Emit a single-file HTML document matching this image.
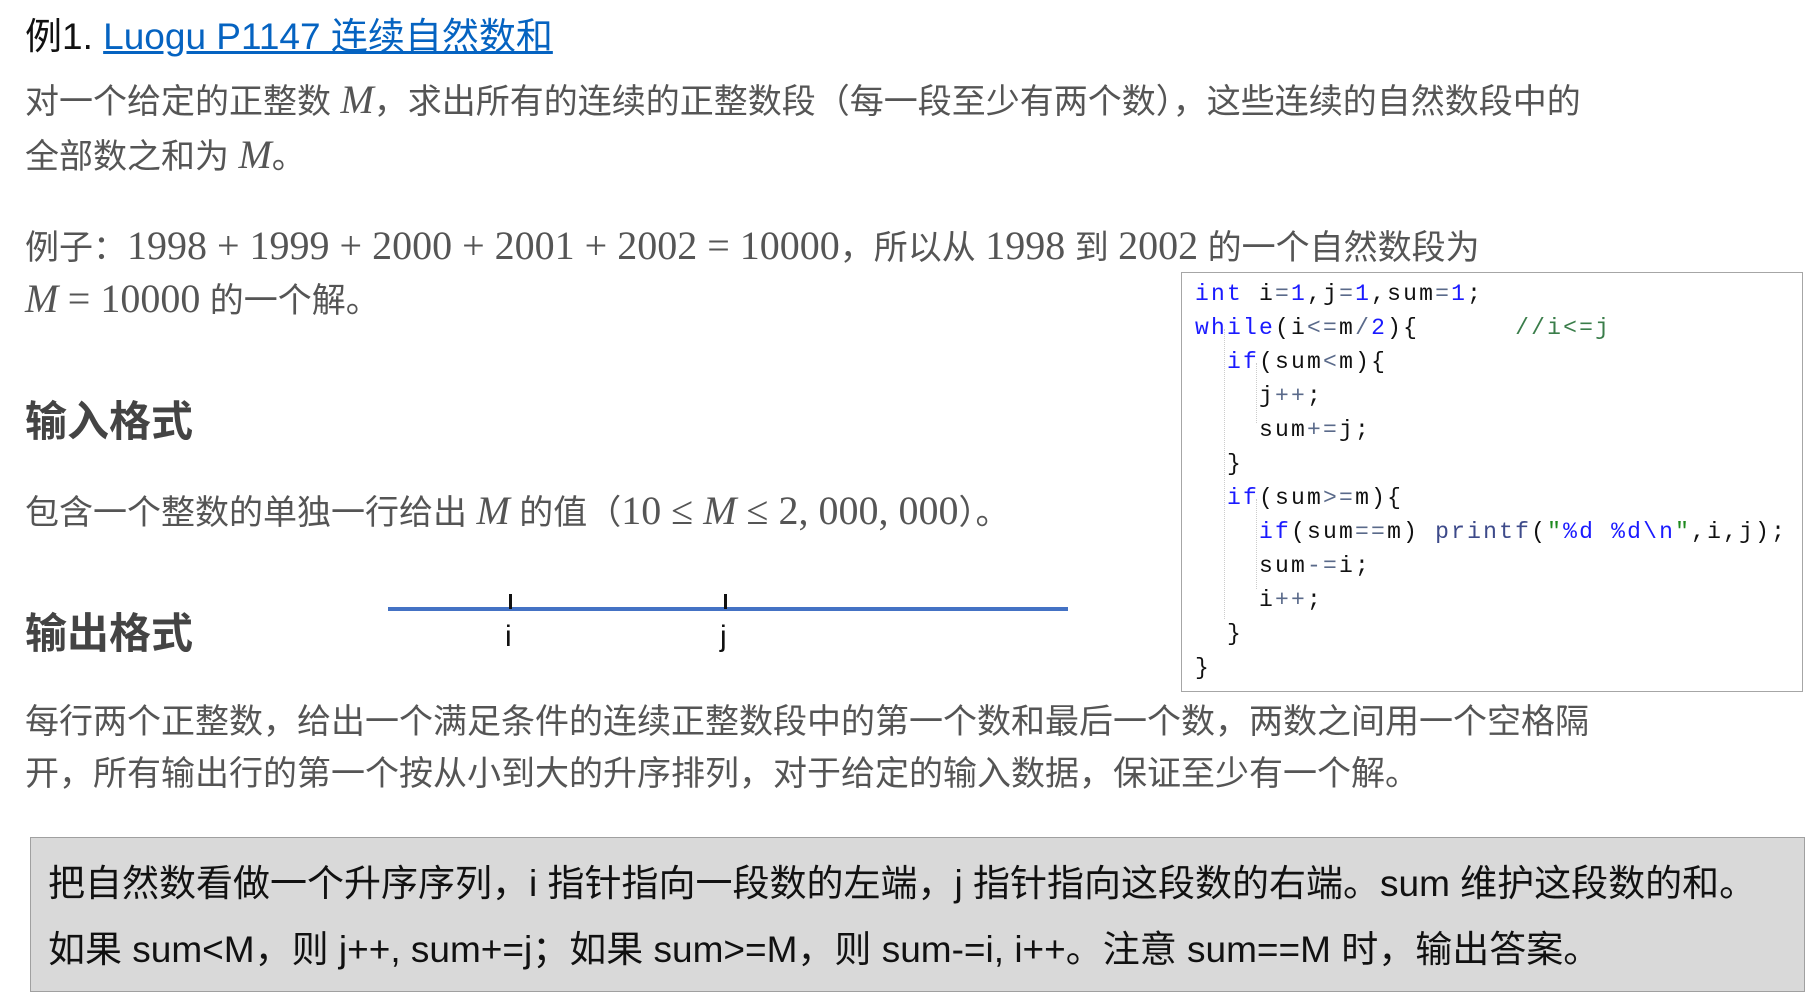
<!DOCTYPE html>
<html><head><meta charset="utf-8"><style>
body{margin:0;width:1805px;height:996px;background:#fff;position:relative;overflow:hidden;font-family:"Liberation Sans","Noto Sans CJK SC",sans-serif;}
.t{position:absolute;white-space:nowrap;line-height:1;}
.p{color:#555;font-size:34px;left:25px;}
.m{font-family:"Liberation Serif",serif;font-style:italic;font-size:40px;}
.n{font-family:"Liberation Serif",serif;font-size:40px;}
.h{color:#444;font-weight:bold;font-size:42px;left:25px;}
#code{position:absolute;left:1181px;top:272px;width:622px;height:420px;border:1.5px solid #a6a6a6;box-sizing:border-box;}
.c{position:absolute;font-family:"Liberation Mono",monospace;font-size:23px;letter-spacing:2.2px;color:#111;white-space:pre;line-height:1;}
.k{color:#1a1aff}.g{color:#3a7d4a}.s{color:#1e8a1e}.f{color:#3d4a8a}.o{color:#5a6a8a}
.gd{position:absolute;border-left:1.5px dotted #ccc;}
</style></head><body>
<div class="t" style="left:25px;top:18px;font-size:37px;color:#111;">例1. <span style="color:#0563c1;text-decoration:underline;">Luogu P1147 连续自然数和</span></div>
<div class="t p" style="top:80px;">对一个给定的正整数 <span class="m">M</span>，求出所有的连续的正整数段（每一段至少有两个数），这些连续的自然数段中的</div>
<div class="t p" style="top:135px;">全部数之和为 <span class="m">M</span>。</div>
<div class="t p" style="top:226px;">例子：<span class="n">1998 + 1999 + 2000 + 2001 + 2002 = 10000</span>，所以从 <span class="n">1998</span> 到 <span class="n">2002</span> 的一个自然数段为</div>
<div class="t p" style="top:279px;"><span class="m">M</span> <span class="n">= 10000</span> 的一个解。</div>
<div class="t h" style="top:401px;">输入格式</div>
<div class="t p" style="top:491px;">包含一个整数的单独一行给出 <span class="m">M</span> 的值（<span class="n">10 ≤ <i>M</i> ≤ 2, 000, 000</span>）。</div>
<div class="t h" style="top:613px;">输出格式</div>
<div style="position:absolute;left:388px;top:607px;width:680px;height:4px;background:#4472c4;"></div>
<div style="position:absolute;left:509px;top:594px;width:3px;height:15px;background:#111;"></div>
<div style="position:absolute;left:724px;top:594px;width:3px;height:15px;background:#111;"></div>
<div class="t" style="left:505px;top:622px;font-size:30px;color:#111;">i</div>
<div class="t" style="left:720px;top:622px;font-size:30px;color:#111;">j</div>
<div class="t p" style="top:705px;">每行两个正整数，给出一个满足条件的连续正整数段中的第一个数和最后一个数，两数之间用一个空格隔</div>
<div class="t p" style="top:757px;">开，所有输出行的第一个按从小到大的升序排列，对于给定的输入数据，保证至少有一个解。</div>
<div id="code">
<div class="gd" style="left:42px;top:56px;height:290px;"></div>
<div class="gd" style="left:74px;top:90px;height:60px;"></div>
<div class="gd" style="left:74px;top:226px;height:90px;"></div>
<div class="c" style="left:13px;top:10px;"><span class="k">int</span> i<span class="o">=</span><span class="k">1</span>,j<span class="o">=</span><span class="k">1</span>,sum<span class="o">=</span><span class="k">1</span>;</div>
<div class="c" style="left:13px;top:44px;"><span class="k">while</span>(i<span class="o">&lt;=</span>m<span class="o">/</span><span class="k">2</span>){      <span class="g">//i&lt;=j</span></div>
<div class="c" style="left:13px;top:78px;">  <span class="k">if</span>(sum<span class="o">&lt;</span>m){</div>
<div class="c" style="left:13px;top:112px;">    j<span class="o">++</span>;</div>
<div class="c" style="left:13px;top:146px;">    sum<span class="o">+=</span>j;</div>
<div class="c" style="left:13px;top:180px;">  }</div>
<div class="c" style="left:13px;top:214px;">  <span class="k">if</span>(sum<span class="o">&gt;=</span>m){</div>
<div class="c" style="left:13px;top:248px;">    <span class="k">if</span>(sum<span class="o">==</span>m) <span class="f">printf</span>(<span class="s">"</span><span class="k">%d %d\n</span><span class="s">"</span>,i,j);</div>
<div class="c" style="left:13px;top:282px;">    sum<span class="o">-=</span>i;</div>
<div class="c" style="left:13px;top:316px;">    i<span class="o">++</span>;</div>
<div class="c" style="left:13px;top:350px;">  }</div>
<div class="c" style="left:13px;top:384px;">}</div>
</div>
<div style="position:absolute;left:30px;top:837px;width:1775px;height:155px;background:#d9d9d9;border:1.5px solid #a0a0a0;box-sizing:border-box;"></div>
<div class="t" style="left:48px;top:865px;font-size:37px;color:#111;">把自然数看做一个升序序列，i 指针指向一段数的左端，j 指针指向这段数的右端。sum 维护这段数的和。</div>
<div class="t" style="left:48px;top:931px;font-size:37px;color:#111;">如果 sum&lt;M，则 j++, sum+=j；如果 sum&gt;=M，则 sum-=i, i++。注意 sum==M 时，输出答案。</div>
</body></html>
